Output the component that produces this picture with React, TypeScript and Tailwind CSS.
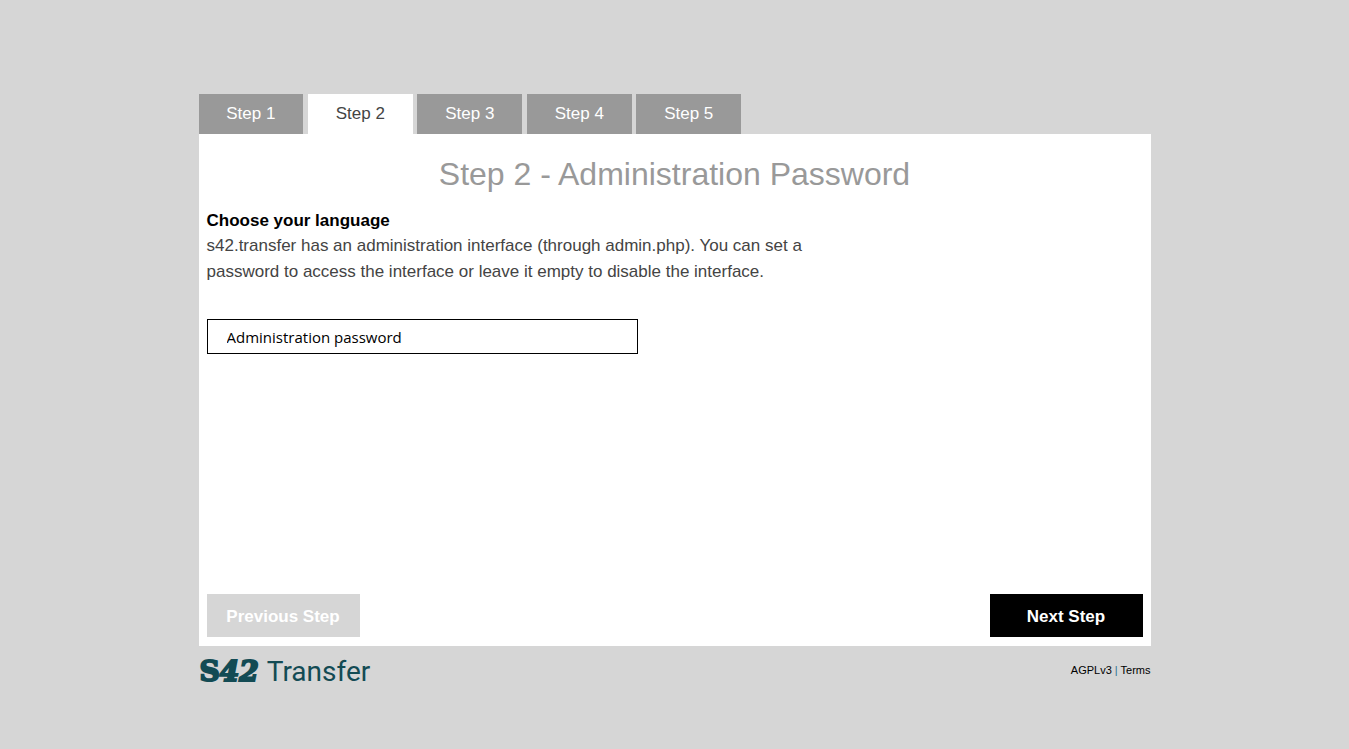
const steps = [1, 2, 3, 4, 5];
const current = 2;

function StepTabs() {
  return (
    <nav aria-label="Installation steps" className="flex gap-[0.5%]">
      {steps.map((step) => (
        <a
          key={step}
          href={`#step-${step}`}
          aria-current={step === current ? 'step' : undefined}
          className={
            step === current
              ? 'w-[11%] bg-white py-2 text-center leading-6 text-[#444444]'
              : 'w-[11%] bg-[#999999] py-2 text-center leading-6 text-white'
          }
        >
          Step {step}
        </a>
      ))}
    </nav>
  );
}

function Logo() {
  return (
    <a href="#home" className="flex items-baseline gap-2 pl-px text-[28px] leading-8 text-[#134b54]">
      <span className="font-['DejaVu_Serif',serif] font-bold [-webkit-text-stroke:2px_#134b54]">
        S<i>42</i>
      </span>
      <span className="font-[Roboto,sans-serif]">Transfer</span>
    </a>
  );
}

export default function App() {
  return (
    <div className="min-h-screen bg-[#d6d6d6] px-4 pt-[94px] font-['Liberation_Sans',Arial,sans-serif] text-[17px] text-[#444444]">
      <div className="mx-auto max-w-[952px]">
        <StepTabs />
        <main className="flex min-h-[512px] flex-col bg-white px-2 pt-5 pb-[9px]">
          <h1 className="text-center text-[32px] leading-10 text-[#999999]">
            Step 2 - Administration Password
          </h1>
          <h2 className="mt-[15px] font-bold leading-6 text-black">Choose your language</h2>
          <p className="max-w-[620px] leading-[26px]">
            s42.transfer has an administration interface (through admin.php). You can set a password
            to access the interface or leave it empty to disable the interface.
          </p>
          <input
            type="text"
            aria-label="Administration password"
            placeholder="Administration password"
            className="mt-[34px] h-[35px] w-full max-w-[431px] border border-black bg-white px-[19px] font-[Tahoma,'Open_Sans',sans-serif] text-[15px] text-black placeholder:text-black"
          />
          <div className="mt-auto flex justify-between">
            <button type="button" className="h-[43px] w-[153px] bg-[#d6d6d6] pt-0.5 font-bold text-white">
              Previous Step
            </button>
            <button type="button" className="h-[43px] w-[153px] bg-black pt-0.5 font-bold text-white">
              Next Step
            </button>
          </div>
        </main>
        <footer className="flex items-start justify-between pt-2.5">
          <Logo />
          <div className="text-[11px] leading-7 text-black">
            <a href="#license">AGPLv3</a> <span className="text-[#2a7090]">|</span>{' '}
            <a href="#terms">Terms</a>
          </div>
        </footer>
      </div>
    </div>
  );
}
